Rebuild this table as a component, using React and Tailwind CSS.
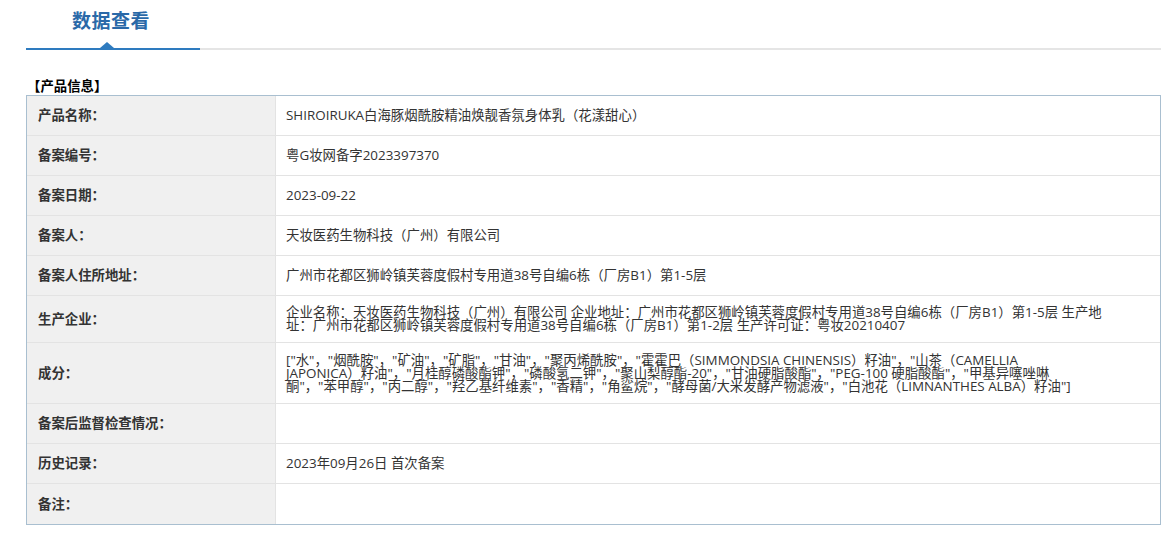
const rows = [
  { label: '产品名称：', lines: ['SHIROIRUKA白海豚烟酰胺精油焕靓香氛身体乳（花漾甜心）'], h: 'h-[40px]' },
  { label: '备案编号：', lines: ['粤G妆网备字2023397370'], h: 'h-[40px]' },
  { label: '备案日期：', lines: ['2023-09-22'], h: 'h-[40px]' },
  { label: '备案人：', lines: ['天妆医药生物科技（广州）有限公司'], h: 'h-[40px]' },
  { label: '备案人住所地址：', lines: ['广州市花都区狮岭镇芙蓉度假村专用道38号自编6栋（厂房B1）第1-5层'], h: 'h-[40px]' },
  {
    label: '生产企业：',
    lines: [
      '企业名称：天妆医药生物科技（广州）有限公司 企业地址：广州市花都区狮岭镇芙蓉度假村专用道38号自编6栋（厂房B1）第1-5层 生产地',
      '址：广州市花都区狮岭镇芙蓉度假村专用道38号自编6栋（厂房B1）第1-2层 生产许可证：粤妆20210407',
    ],
    h: 'h-[47px]',
  },
  {
    label: '成分：',
    lines: [
      '["水"，"烟酰胺"，"矿油"，"矿脂"，"甘油"，"聚丙烯酰胺"，"霍霍巴（SIMMONDSIA CHINENSIS）籽油"，"山茶（CAMELLIA',
      'JAPONICA）籽油"，"月桂醇磷酸酯钾"，"磷酸氢二钾"，"聚山梨醇酯-20"，"甘油硬脂酸酯"，"PEG-100 硬脂酸酯"，"甲基异噻唑啉',
      '酮"，"苯甲醇"，"丙二醇"，"羟乙基纤维素"，"香精"，"角鲨烷"，"酵母菌/大米发酵产物滤液"，"白池花（LIMNANTHES ALBA）籽油"]',
    ],
    h: 'h-[61px]',
  },
  { label: '备案后监督检查情况：', lines: [], h: 'h-[40px]' },
  { label: '历史记录：', lines: ['2023年09月26日 首次备案'], h: 'h-[40px]' },
  { label: '备注：', lines: [], h: 'h-[40px]' },
];

export default function App() {
  return (
    <div className="min-h-[535px] w-[1172px] bg-white pl-[26px] pr-[11px] font-['Open_Sans','Noto_Sans_CJK_SC',sans-serif] text-[13.4px] text-[#333]">
      <div className="relative flex h-[50px] items-end">
        <div className="relative flex h-[50px] w-[174px] flex-col border-b-2 border-[#2e7bbf]">
          <div className="pl-[46px] pt-[6px] font-['Noto_Sans_CJK_SC',sans-serif] text-[19px] font-bold leading-[28px] tracking-[0.5px] text-[#2a69a8]">数据查看</div>
          <div className="absolute bottom-0 left-[74px] h-0 w-0 border-x-[7px] border-b-[6px] border-x-transparent border-b-[#2e7bbf]"></div>
        </div>
        <div className="h-[2px] flex-1 bg-[#e5e5e5]"></div>
      </div>

      <div className="mt-[28px] pl-[1px] font-bold leading-[16px] text-black">【产品信息】</div>

      <div className="mt-[1px] border border-[#a9bfd0]">
        {rows.map((row, i) => (
          <div key={i} className={`flex ${row.h} ${i < rows.length - 1 ? 'border-b border-[#e3e3e3]' : ''}`}>
            <div className="flex w-[249px] shrink-0 items-center border-r border-[#e3e3e3] bg-[#f0f0f0] pl-[11px] font-bold text-[#333]">
              {row.label}
            </div>
            <div className="flex flex-1 flex-col justify-center pl-[10px]">
              {row.lines.map((line, j) => (
                <div key={j} className="whitespace-nowrap leading-[13px]">{line}</div>
              ))}
            </div>
          </div>
        ))}
      </div>
    </div>
  );
}
